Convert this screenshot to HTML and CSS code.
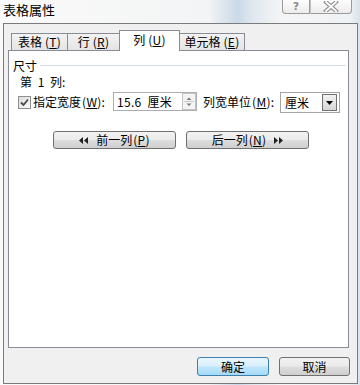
FILE: index.html
```html
<!DOCTYPE html>
<html lang="zh-CN">
<head>
<meta charset="utf-8">
<title>表格属性</title>
<link rel="stylesheet" href="styles.css">
</head>
<body>
<div class="window">
  <div class="titlebar">
    <span class="title">表格属性</span>
    <div class="caption">
      <span class="cap-btn help">?</span>
      <span class="cap-btn close">
        <svg width="16" height="11" viewBox="0 0 16 11"><path d="M3 1 L13 10 M13 1 L3 10" stroke="#8a8a8a" stroke-width="4" stroke-linecap="square"/><path d="M3 1 L13 10 M13 1 L3 10" stroke="#fafafa" stroke-width="2" stroke-linecap="square"/></svg>
      </span>
    </div>
  </div>
  <div class="client">
    <div class="tabs">
      <div class="tab t1">表格<span class="mn">(<u>T</u>)</span></div>
      <div class="tab t2">行<span class="mn">(<u>R</u>)</span></div>
      <div class="tab t3 sel">列<span class="mn">(<u>U</u>)</span></div>
      <div class="tab t4">单元格<span class="mn">(<u>E</u>)</span></div>
    </div>
    <div class="panel">
      <div class="group"><span>尺寸</span><span class="rule"></span></div>
      <div class="colno">第 1 列:</div>
      <div class="row">
        <span class="check">
          <svg width="11" height="11" viewBox="0 0 11 11"><path d="M2 5.5 L4.5 8 L9 2.5" fill="none" stroke="#4a4a4a" stroke-width="1.8"/></svg>
        </span>
        <span class="label label1">指定宽度<span class="mn">(<u>W</u>)</span>:</span>
        <span class="input">
          <span class="input-text">15.6 厘米</span>
          <span class="spin">
            <svg width="12" height="15" viewBox="0 0 12 15"><path d="M3.5 6 L6 3.5 L8.5 6 Z" fill="#7a7a7a"/><path d="M1 7.5 H11" stroke="#c8c8c8" stroke-width="1"/><path d="M3.5 9.5 L6 12 L8.5 9.5 Z" fill="#7a7a7a"/></svg>
          </span>
        </span>
        <span class="label label2">列宽单位<span class="mn">(<u>M</u>)</span>:</span>
        <span class="select">
          <span class="select-text">厘米</span>
          <span class="arrow">
            <svg width="7" height="4" viewBox="0 0 7 4"><path d="M0 0 H7 L3.5 4 Z" fill="#000"/></svg>
          </span>
        </span>
      </div>
      <div class="navs">
        <button class="btn nav">
          <svg width="9" height="7" viewBox="0 0 9 7"><path d="M0 3.5 L4 0 V7 Z M5 3.5 L9 0 V7 Z" fill="#222"/></svg>
          <span>前一列<span class="mn">(<u>P</u>)</span></span>
        </button>
        <button class="btn nav">
          <span>后一列<span class="mn">(<u>N</u>)</span></span>
          <svg width="9" height="7" viewBox="0 0 9 7"><path d="M0 0 L4 3.5 L0 7 Z M5 0 L9 3.5 L5 7 Z" fill="#222"/></svg>
        </button>
      </div>
    </div>
    <div class="footer">
      <button class="btn ok">确定</button>
      <button class="btn cancel">取消</button>
    </div>
  </div>
</div>
</body>
</html>
```
FILE: styles.css
```css
html, body {
  margin: 0;
  padding: 0;
}
body {
  width: 360px;
  height: 385px;
  overflow: hidden;
  font-family: "Noto Sans CJK SC", "Noto Sans", sans-serif;
  font-size: 12px;
  color: #000;
}
u {
  text-decoration: underline;
  text-underline-offset: 1px;
}
.mn {
  margin-left: 1px;
  letter-spacing: 0.3px;
}
.window {
  width: 360px;
  height: 385px;
  display: flex;
  flex-direction: column;
  background: linear-gradient(90deg, #fafafa 0%, #f3f4f5 58%, #dde6ee 62%, #c9d9e9 66%, #dfe7ee 70%, #f4f5f6 78%, #eff2f5 97%, #d9e3ec 100%);
}
.titlebar {
  height: 23px;
  display: flex;
  align-items: flex-start;
  flex: none;
}
.title {
  padding-left: 3px;
  padding-top: 2px;
  font-size: 13px;
  line-height: 16px;
}
.caption {
  margin-left: auto;
  margin-right: 8px;
  display: flex;
}
.cap-btn {
  height: 14px;
  box-sizing: border-box;
  border: 1px solid #9a9a9a;
  border-top: none;
  background: linear-gradient(#fdfdfd, #ececec);
  display: flex;
  align-items: center;
  justify-content: center;
}
.help {
  width: 28px;
  border-bottom-left-radius: 4px;
  color: #8a8a8a;
  font-family: "DejaVu Sans", sans-serif;
  font-weight: bold;
  font-size: 11px;
  line-height: 12px;
}
.close {
  width: 42px;
  border-left: 1px solid #c0c0c0;
  border-bottom-right-radius: 4px;
}
.client {
  margin-left: 3px;
  width: 355px;
  height: 361px;
  box-sizing: border-box;
  border: 1px solid #7b7b7b;
  background: #f0f0f0;
  display: flex;
  flex-direction: column;
  flex: none;
}
.tabs {
  height: 26px;
  display: flex;
  align-items: flex-end;
  padding-left: 7px;
  flex: none;
}
.tab {
  height: 17px;
  box-sizing: border-box;
  border: 1px solid #898c95;
  border-bottom: none;
  background: linear-gradient(#f3f3f3, #e4e4e4);
  display: flex;
  align-items: center;
  justify-content: center;
  margin-right: -1px;
  line-height: 14px;
}
.tab .mn {
  margin-left: 3px;
}
.t1 { width: 57px; }
.t2 { width: 53px; }
.t3 { width: 61px; }
.t4 { width: 66px; }
.tab.sel {
  height: 21px;
  background: #fff;
  position: relative;
  z-index: 1;
  margin-bottom: -1px;
  padding-bottom: 3px;
}
.panel {
  margin-left: 4px;
  width: 341px;
  height: 298px;
  box-sizing: border-box;
  border: 1px solid #898c95;
  background: #fff;
  flex: none;
}
.group {
  display: flex;
  align-items: center;
  height: 14px;
  line-height: 14px;
  margin-top: 8px;
  padding-left: 4px;
}
.rule {
  flex: 1;
  height: 1px;
  background: #d5dfe5;
  margin-left: 3px;
  margin-right: 2px;
  margin-top: -1px;
}
.colno {
  margin-top: 2px;
  height: 14px;
  line-height: 14px;
  padding-left: 11px;
  word-spacing: 3px;
}
.row {
  display: flex;
  align-items: flex-start;
  margin-top: 3px;
  height: 21px;
}
.check {
  width: 13px;
  height: 13px;
  box-sizing: border-box;
  border: 1px solid #8e8f8f;
  background: linear-gradient(135deg, #dcdcdc, #fbfbfb);
  margin-left: 9px;
  margin-top: 4px;
  display: flex;
  align-items: center;
  justify-content: center;
}
.label {
  height: 19px;
  line-height: 19px;
  white-space: nowrap;
}
.label1 {
  width: 80px;
  margin-left: 2px;
}
.input {
  width: 84px;
  height: 19px;
  box-sizing: border-box;
  border: 1px solid #abadb3;
  display: flex;
  align-items: center;
}
.input-text {
  flex: 1;
  padding-left: 3px;
  line-height: 17px;
  word-spacing: 3px;
  letter-spacing: 0.3px;
}
.spin {
  width: 14px;
  height: 17px;
  box-sizing: border-box;
  border: 1px solid #c4c4c4;
  background: #f4f4f4;
  display: flex;
  align-items: center;
  justify-content: center;
}
.label2 {
  width: 77px;
  margin-left: 6px;
}
.select {
  width: 60px;
  height: 21px;
  box-sizing: border-box;
  border: 1px solid #a4a4a4;
  display: flex;
  align-items: center;
  padding-right: 2px;
}
.select-text {
  flex: 1;
  padding-left: 4px;
  line-height: 17px;
}
.arrow {
  width: 15px;
  height: 17px;
  box-sizing: border-box;
  border: 1px solid #707070;
  background: linear-gradient(#f2f2f2, #d6d6d6);
  display: flex;
  align-items: center;
  justify-content: center;
}
.navs {
  display: flex;
  gap: 10px;
  margin-top: 18px;
  padding-left: 44px;
}
.btn {
  box-sizing: border-box;
  border: 1px solid #707070;
  border-radius: 3px;
  background: linear-gradient(#f2f2f2 0%, #ebebeb 48%, #dddddd 52%, #cfcfcf 100%);
  font-family: "Noto Sans CJK SC", "Noto Sans", sans-serif;
  font-size: 12px;
  color: #000;
  padding: 0;
  display: flex;
  align-items: center;
  justify-content: center;
  line-height: 14px;
}
.nav {
  width: 123px;
  height: 18px;
  gap: 8px;
}
.footer {
  display: flex;
  justify-content: flex-end;
  gap: 10px;
  padding-right: 7px;
  margin-top: 9px;
}
.ok {
  width: 72px;
  height: 19px;
  border-color: #3c7fb1;
  background: linear-gradient(#eaf6fd 0%, #d9f0fc 48%, #bee6fd 52%, #a7d9f5 100%);
}
.cancel {
  width: 71px;
  height: 19px;
}
```
